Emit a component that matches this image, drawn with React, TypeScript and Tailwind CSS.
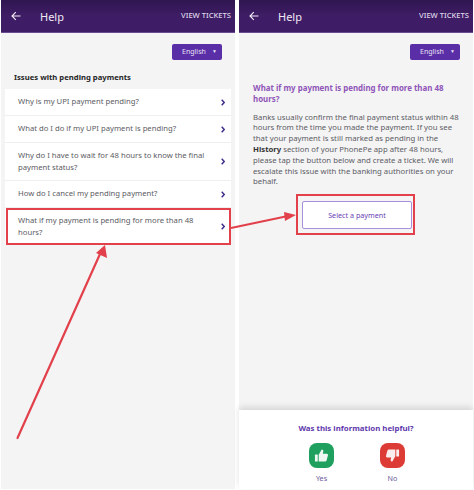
import React from 'react';

const FONT = "font-['Noto_Sans','Open_Sans',sans-serif]";

const questions = [
  'Why is my UPI payment pending?',
  'What do I do if my UPI payment is pending?',
  'Why do I have to wait for 48 hours to know the final payment status?',
  'How do I cancel my pending payment?',
  'What if my payment is pending for more than 48 hours?',
];

const Header: React.FC = () => (
  <div className="h-[33px] shrink-0 flex items-center bg-gradient-to-b from-[#2f1650] via-[#3f1d66] to-[#3f1d66] border-b border-[#6b4a94] text-white">
    <svg className="ml-[10px] w-[10px] h-[10px]" viewBox="0 0 10 10" fill="none" stroke="#f1ecf6" strokeWidth="1.1">
      <path d="M9.5 5H1M4.8 1.2 1 5l3.8 3.8" />
    </svg>
    <span className="ml-[19px] text-[11px] leading-none text-[#eee8f4]">Help</span>
    <span className="ml-auto mr-[4px] text-[7.6px] leading-none font-medium text-[#ddd5e8]">VIEW TICKETS</span>
  </div>
);

const LanguageButton: React.FC = () => (
  <div className="flex justify-end pr-[13px] mt-[11px]">
    <div className="w-[50px] h-[16px] rounded-[2px] bg-[#5a2ea6] flex items-center justify-between pl-[10px] pr-[5px] text-[7px] text-[#e8e0f5]">
      <span>English</span>
      <span className="text-[5px]">▼</span>
    </div>
  </div>
);

const App: React.FC = () => {
  return (
    <div className={`${FONT} relative w-[474px] h-[490px] bg-white flex gap-[4px] pl-[1px] pr-[1px] overflow-hidden`}>
      {/* list screen */}
      <div className="w-[234px] h-[489px] bg-[#f4f4f5] flex flex-col">
        <Header />
        <LanguageButton />
        <h2 className="ml-[13px] mt-[11px] text-[7.7px] leading-[13px] font-bold text-[#262626]">Issues with pending payments</h2>
        <div className="mx-[4px] mt-[5px] flex flex-col gap-px bg-[#efeff0]">
          {questions.map(q => (
            <div key={q} className="bg-white flex items-center justify-between pl-[13px] pr-[6px] py-[7px] min-h-[26px]">
              <span className="w-[193px] text-[7.7px] leading-[11.5px] text-[#5c5c64]">{q}</span>
              <svg className="w-[4px] h-[7px] shrink-0" viewBox="0 0 4 7" fill="none" stroke="#3f2b8c" strokeWidth="1.4">
                <path d="M.7.7 3.2 3.5.7 6.3" />
              </svg>
            </div>
          ))}
        </div>
      </div>

      {/* answer screen */}
      <div className="w-[234px] h-[489px] bg-[#f4f4f5] flex flex-col">
        <Header />
        <LanguageButton />
        <div className="px-[14px] mt-[23px] flex-1">
          <h2 className="text-[7.9px] leading-[10.8px] font-bold text-[#8f55b8]">What if my payment is pending for more than 48 hours?</h2>
          <p className="mt-[7px] text-[7.75px] leading-[10.8px] text-[#5c5c64]">
            Banks usually confirm the final payment status within 48 hours from the time you made the payment. If you see that your payment is still marked as pending in the <b className="text-[#333]">History</b> section of your PhonePe app after 48 hours, please tap the button below and create a ticket. We will escalate this issue with the banking authorities on your behalf.
          </p>
          <div className="mt-[14px] ml-[49px] w-[110px] h-[28px] bg-white border border-[#a78fdc] rounded-[2px] flex items-center justify-center text-[7.2px] text-[#6a3fb5]">
            Select a payment
          </div>
        </div>
        <div className="h-[79px] bg-white shadow-[0_-3px_6px_rgba(0,0,0,0.12)] flex flex-col items-center pt-[12px]">
          <div className="text-[7.85px] leading-[13px] font-bold text-[#5f37ad]">Was this information helpful?</div>
          <div className="mt-[8px] ml-[2px] flex gap-[46px]">
            <div className="flex flex-col items-center w-[25px]">
              <div className="w-[25px] h-[25px] rounded-[8px] bg-[#1fa05e] flex items-center justify-center">
                <svg className="w-[15px] h-[15px]" viewBox="0 0 16 16" fill="#eef7f1">
                  <rect x="1" y="7" width="3" height="7.5" rx=".6" />
                  <path d="M5 7.2 8.2 1.5c1.3 0 2 .9 1.7 2.2L9.4 6h4.2c1 0 1.6.9 1.3 1.8l-1.5 5.6c-.2.7-.8 1.1-1.5 1.1H5z" />
                </svg>
              </div>
              <span className="mt-[5px] text-[7.2px] leading-[11px] text-[#6a5a9c]">Yes</span>
            </div>
            <div className="flex flex-col items-center w-[25px]">
              <div className="w-[25px] h-[25px] rounded-[8px] bg-[#dd3c36] flex items-center justify-center">
                <svg className="w-[15px] h-[15px]" viewBox="0 0 16 16" fill="#fbeeee">
                  <rect x="12" y="1.5" width="3" height="7.5" rx=".6" />
                  <path d="M11 8.8 7.8 14.5c-1.3 0-2-.9-1.7-2.2L6.6 10H2.4c-1 0-1.6-.9-1.3-1.8l1.5-5.6c.2-.7.8-1.1 1.5-1.1H11z" />
                </svg>
              </div>
              <span className="mt-[5px] text-[7.2px] leading-[11px] text-[#6a5a9c]">No</span>
            </div>
          </div>
        </div>
      </div>

      {/* red annotations on top of the screenshots */}
      <div className="absolute left-[6px] top-[208px] w-[225px] h-[37px] border-[2.5px] border-[#e2414b]" />
      <div className="absolute left-[296px] top-[194px] w-[119px] h-[41px] border-[2.5px] border-[#e2414b]" />
      <svg className="absolute inset-0 w-[474px] h-[490px] pointer-events-none" viewBox="0 0 474 490" fill="none">
        <path d="M17.5 438 100 254" stroke="#e2414b" strokeWidth="2.2" strokeLinecap="round" />
        <path d="M105 245 107 258 96 253z" fill="#e2414b" />
        <path d="M231 228 288 216" stroke="#e2414b" strokeWidth="2.2" />
        <path d="M296 215 285 221 284 212z" fill="#e2414b" />
      </svg>
    </div>
  );
};

export default App;
